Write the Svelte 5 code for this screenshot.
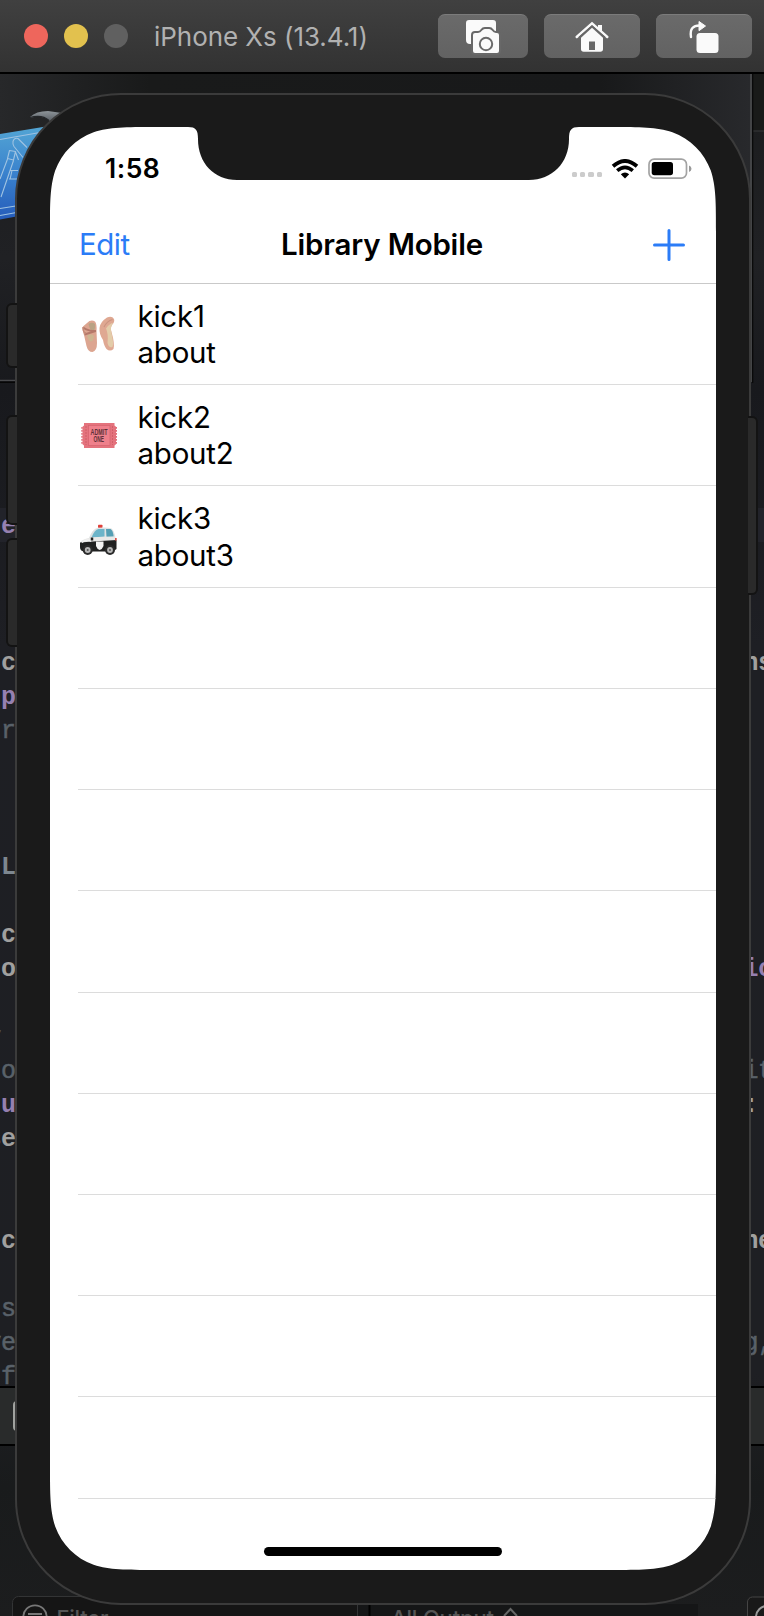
<script>
  const items = [
    { icon: 'shoes', name: 'kick1', about: 'about' },
    { icon: 'ticket', name: 'kick2', about: 'about2' },
    { icon: 'police', name: 'kick3', about: 'about3' },
  ];
  const emptyRows = Array.from({ length: 9 });

  // Editor code peeking out on either side of the device
  const code = [
    { x: 1, y: 533, t: 'e', c: 'key' },
    { x: 1, y: 670, t: 'c', c: 'plain' },
    { x: 1, y: 704, t: 'p', c: 'key' },
    { x: 1, y: 738, t: 'r', c: 'note' },
    { x: 1, y: 874, t: 'L', c: 'mark' },
    { x: 1, y: 942, t: 'c', c: 'plain' },
    { x: 1, y: 976, t: 'o', c: 'plain' },
    { x: -8, y: 1034, t: ',', c: 'note' },
    { x: 1, y: 1078, t: 'o', c: 'note' },
    { x: 1, y: 1112, t: 'u', c: 'key' },
    { x: -13.4, y: 1146, t: 'se', c: 'plain' },
    { x: 1, y: 1248, t: 'c', c: 'plain' },
    { x: 1, y: 1316, t: 's', c: 'note' },
    { x: -13.4, y: 1350, t: 've', c: 'note' },
    { x: 1, y: 1384, t: 'f', c: 'note' },
    { x: 743.5, y: 670, t: 'ns', c: 'plain' },
    { x: 743.5, y: 976, t: 'ic', c: 'key' },
    { x: 743.5, y: 1078, t: 'it', c: 'note' },
    { x: 743.5, y: 1112, t: ':', c: 'plain' },
    { x: 743.5, y: 1248, t: 'ne', c: 'plain' },
    { x: 743.5, y: 1350, t: 'g,', c: 'note' },
  ];
</script>

<div class="desktop">
  <svg class="backdrop" width="764" height="1616" viewBox="0 0 764 1616">
    <defs>
      <linearGradient id="shade" x1="0" x2="0" y1="0" y2="1">
        <stop offset="0" stop-color="#191a1b" /><stop offset="0.16" stop-color="#202124" />
        <stop offset="0.24" stop-color="#18191d" /><stop offset="0.4" stop-color="#1e1f24" />
        <stop offset="0.85" stop-color="#1e1f23" /><stop offset="0.92" stop-color="#191b1c" />
        <stop offset="1" stop-color="#1c1d1e" />
      </linearGradient>
      <linearGradient id="blueprint" x1="0" x2="0" y1="0" y2="1">
        <stop offset="0" stop-color="#53a5d4" /><stop offset="0.5" stop-color="#3a82cd" /><stop offset="1" stop-color="#255cba" />
      </linearGradient>
      <linearGradient id="topglow" x1="0" x2="1" y1="0" y2="0">
        <stop offset="0" stop-color="#27282a" /><stop offset="0.2" stop-color="#191a1a" />
        <stop offset="0.8" stop-color="#18191a" /><stop offset="1" stop-color="#28292c" />
      </linearGradient>
      <linearGradient id="steel" x1="0" x2="0" y1="0" y2="1">
        <stop offset="0" stop-color="#8d9499" /><stop offset="1" stop-color="#5a6066" />
      </linearGradient>
    </defs>
    <rect width="764" height="1616" fill="url(#shade)" />
    <rect y="74" width="750" height="120" fill="url(#topglow)" />
    <rect x="753" y="74" width="11" height="57" fill="#191a19" />
    <path d="M753 131h11" stroke="#2f3032" stroke-width="1.5" />
    <path d="M751 74v308" stroke="#434446" stroke-width="2" />
    <path d="M752.7 74v309" stroke="#080808" stroke-width="1.2" />
    <path d="M0 380.5h17" stroke="#48494c" stroke-width="1.5" />
    <path d="M0 382.2h17" stroke="#060606" stroke-width="1.5" />
    <rect y="508" width="16" height="34" fill="#22232a" />
    <rect x="751" y="508" width="13" height="34" fill="#22232a" />

    <path d="M0 134L46 126.500L30 214L0 219.500Z" fill="url(#blueprint)" />
    <g fill="none" stroke="#9fc3e2" stroke-width="1.100" stroke-linejoin="round">
      <path d="M0 139.500L40 132.500M0 208.500L22 205M0 215.500L22 211.500" />
      <path d="M18 138.500q-4-1-5 3-.5 3 1 5l9 11M18 138.500l9 9" />
      <path d="M9.500 150.500l6 1-2 8.500-6-1.500zM7.500 159L0 179M13.500 160.500L1 197M15.500 152l3 8" />
      <path d="M10 170.500h8M9 179h8M12 170.500l-2 9" />
    </g>
    <path d="M30 117Q36 111 48 111L62 113L50 121Q42 114.500 30 118Z" fill="url(#steel)" />
    <path d="M30 117.500Q42 114 49 120.500" fill="none" stroke="#24272a" stroke-width="1.200" />

    <g class="code">
      {#each code as f}
        <text x={f.x} y={f.y} class={f.c}>{f.t}</text>
      {/each}
    </g>

    <rect y="1386" width="764" height="60" fill="#292b2b" />
    <path d="M0 1387h764M0 1445h764" stroke="#000" stroke-width="2" />
    <rect x="14" y="1402" width="20" height="28" rx="3" fill="none" stroke="#a0a29f" stroke-width="2" />

    <g class="console">
      <rect x="12.5" y="1596.5" width="345" height="34" rx="6" fill="#151515" stroke="#333435" />
      <rect x="358" y="1604" width="340" height="12" fill="#151617" />
      <path d="M369.5 1596v20" stroke="#000" stroke-width="2" />
      <circle cx="35" cy="1617" r="11.7" fill="none" stroke="#777" stroke-width="1.8" />
      <path d="M28 1614h14" stroke="#777" stroke-width="2" />
      <text x="56.5" y="1626" textLength="52">Filter</text>
      <text x="391" y="1626" textLength="103">All Output</text>
      <path d="M504 1616l6.5-7 6.5 7" fill="none" stroke="#666" stroke-width="2" />
      <rect x="747.5" y="1597" width="30" height="34" rx="5" fill="#191919" stroke="#444" />
      <circle cx="767" cy="1617" r="11" fill="none" stroke="#999" stroke-width="2" />
    </g>
  </svg>

  <main class="simulator">
    <header class="titlebar">
      <div class="lights"><i class="close"></i><i class="min"></i><i class="zoom"></i></div>
      <span class="wintitle">iPhone Xs (13.4.1)</span>
      <div class="tools">
        <button class="tool first" aria-label="Screenshot">
          <svg width="36" height="36" viewBox="0 0 36 36">
            <path d="M4 1h24a3 3 0 0 1 3 3v12H7v9H5a4 4 0 0 1-4-4V4a3 3 0 0 1 3-3z" fill="#fafafa" />
            <path d="M10 13h3q2 0 3.3-2 1.5-2 3.5-2h4.400q2 0 3.500 2 1.300 2 3.300 2H32q3 0 3 3v16q0 3-3 3H10q-3 0-3-3V16q0-3 3-3z" fill="#fafafa" stroke="#686868" stroke-width="2" />
            <circle cx="21" cy="25" r="6.200" fill="none" stroke="#6a6a6a" stroke-width="2" />
          </svg>
        </button>
        <button class="tool" aria-label="Home">
          <svg width="36" height="32" viewBox="0 0 36 32">
            <path d="M24 4h4v8l-4-4z" fill="#fafafa" />
            <path d="M2.700 16L18 2.500 33.300 16" stroke="#fafafa" stroke-width="2.500" stroke-linecap="round" fill="none" />
            <path d="M7 16.800L18 6.800l11 10V28q0 2.700-2.700 2.700H9.700Q7 30.700 7 28z" fill="#fafafa" />
            <path d="M5 16.300L18 4.800l13 11.500" stroke="#686868" stroke-width="1.200" fill="none" />
            <path d="M15 20.500h6V29h-6z" fill="#686868" />
          </svg>
        </button>
        <button class="tool" aria-label="Rotate">
          <svg width="32" height="34" viewBox="0 0 32 34">
            <rect x="8.500" y="13" width="22" height="20" rx="3.500" fill="#fafafa" />
            <path d="M3 17C1.500 8.500 5.500 5.500 11.500 5.500" fill="none" stroke="#fafafa" stroke-width="2.400" stroke-linecap="round" />
            <path d="M11 1.500L17.500 6 11 10.700z" fill="#fafafa" stroke="#fafafa" stroke-linejoin="round" />
          </svg>
        </button>
      </div>
    </header>

    <section class="phone">
      <i class="key mute"></i><i class="key up"></i><i class="key down"></i><i class="key side"></i>
      <div class="screen">
        <div class="status">
          <span class="time">1:58</span>
          <div class="signals">
            <div class="dots"><i></i><i></i><i></i><i></i></div>
            <svg width="28" height="20" viewBox="0 0 28 20">
              <path d="M2 7.200Q14-3.300 26 7.200" fill="none" stroke="#000" stroke-width="3.800" />
              <path d="M6.200 11.700Q14 5 21.800 11.700" fill="none" stroke="#000" stroke-width="3.600" />
              <path d="M9.800 15.300Q14 11.500 18.200 15.300L14 19.500z" />
            </svg>
            <svg class="battery" width="44" height="22" viewBox="0 0 44 22">
              <rect x="1" y="1.200" width="37.500" height="19" rx="5.200" fill="#fff" stroke="#a3a3a3" stroke-width="1.700" />
              <rect x="3.700" y="4" width="21.300" height="13.300" rx="2.700" />
              <path d="M41 7.500q2.500 1 2.500 3.300T41 14z" fill="#999" />
            </svg>
          </div>
        </div>

        <nav>
          <span class="edit">Edit</span>
          <h1>Library Mobile</h1>
          <svg width="32" height="32" viewBox="0 0 32 32"><path d="M16 1.500v29M1.500 16h29" stroke="#2b7cf7" stroke-width="3" stroke-linecap="round" /></svg>
        </nav>

        <ul>
          {#each items as item}
            <li>
              <svg class="emoji" width="38" height="38" viewBox="0 0 38 38">
                {#if item.icon === 'shoes'}
                  <path d="M8 8Q12 4 16 6.500Q18 9 17.500 16L18 28Q18 36 13.500 37Q9 37 7.500 31L5 20Q3 15 4 11.500z" fill="#dca590" />
                  <path d="M9.500 9Q13 6.500 16 9Q16.500 15 14 16Q11 16 9.500 9z" fill="#b9a284" />
                  <path d="M8 20.500Q13 18 15 21Q14.500 27 11.500 26.500Q9.500 26 8 20.500z" fill="#cdb591" />
                  <path d="M4 12.500q6 4 13 3.500M5.500 19.500l11-3.500" fill="none" stroke="#b5796a" stroke-width="2" />
                  <path d="M4 12q0 6 3 6" fill="none" stroke="#c58b78" stroke-width="1.500" />
                  <path d="M20.500 13Q21 7 28 2.500Q33 .5 35 4Q36 7 33 10Q31 13 32.500 17Q36 29 34.500 34Q31 37 27.500 34Q25 31 24 25Q20 19 20.500 13z" fill="#dfa892" />
                  <path d="M27 13.500Q31 8 34 8Q31 12 32.500 18Q35 29 33.500 32Q30 33.500 28.500 28Q29.500 19 27 13.500z" fill="#e3cca9" />
                  <path d="M25 12Q28 6 33.500 4.500" fill="none" stroke="#cb9480" stroke-width="1.200" />
                {:else if item.icon === 'ticket'}
                  <path d="M5 7H35.500V9.500l1.500 1.200v17.600L35.500 29.500V32H5V29.500L3.500 28.300V10.700L5 9.500z" fill="#e4737d" />
                  <path d="M3 11v17.500M37.300 11v17.500" stroke="#df6c77" stroke-width="1.400" stroke-dasharray="1.700 1.300" />
                  <rect x="9.500" y="9.500" width="21.500" height="20" fill="#ef808b" stroke="#d4626e" stroke-width=".7" />
                  <path d="M7 10v19M33.500 10v19" stroke="#ce5c67" stroke-width=".9" stroke-dasharray="2 1" />
                  <text x="11.500" y="19" textLength="17" lengthAdjust="spacingAndGlyphs">ADMIT</text>
                  <text x="14.500" y="26" textLength="10.500" lengthAdjust="spacingAndGlyphs">ONE</text>
                {:else}
                  <rect x="19" y="6.800" width="4.500" height="3.200" rx=".7" fill="#e0403a" />
                  <path d="M9.500 21Q13.500 10.500 19 9.800Q28 8.800 32.500 10.500Q35.500 13 36.500 20L37 24H9z" fill="#dfe2e3" />
                  <path d="M12.500 19.500Q15.500 11.800 19.500 11H25.500V18.500z" fill="#6cb4c9" />
                  <path d="M27 11h4.500q2.500 1.200 3.200 7.800H27.500z" fill="#559fb4" />
                  <path d="M1.500 24Q4 20.500 12 19.500L35.500 18.500L37.500 23V27H1.500z" fill="#e9e9e8" />
                  <path d="M1 24.500L14 23.500L37.500 22V31q-2 2-6 2.500H5Q1 33 1 29z" fill="#202121" />
                  <path d="M3 24.500q5-4 9-1" fill="none" stroke="#f4f4f4" stroke-width="1.200" />
                  <path d="M17 23.500h7.500v4.500q-1 3-3.800 4-2.700-1-3.700-4z" fill="#f4f4f4" />
                  <path d="M13 19.500v3" stroke="#222" stroke-width="2.500" />
                  <circle cx="8.700" cy="32" r="5" fill="#2b2b2b" /><circle cx="8.700" cy="32" r="2.900" fill="#b7b7b7" />
                  <circle cx="31" cy="32" r="5" fill="#2b2b2b" /><circle cx="31" cy="32" r="2.900" fill="#b7b7b7" />
                  <circle cx="8.700" cy="32" r="1" fill="#555" /><circle cx="31" cy="32" r="1" fill="#555" />
                  <rect x="36" y="20" width="1.700" height="2.500" fill="#da514b" />
                {/if}
              </svg>
              <div class="label"><span>{item.name}</span><span>{item.about}</span></div>
            </li>
          {/each}
          {#each emptyRows as _}<li></li>{/each}
        </ul>
        <div class="home"></div>
      </div>
    </section>
  </main>
</div>

<style>
  :global(body) { margin: 0; background: #1d1e21; }
  * { box-sizing: border-box; }
  .desktop {
    display: grid;
    width: 764px;
    height: 1616px;
    overflow: hidden;
    font-family: Inter, 'Liberation Sans', sans-serif;
  }
  .backdrop, .simulator { grid-area: 1 / 1; min-width: 0; }
  svg { display: block; flex: none; }
  .simulator { position: relative; }
  .code { font: bold 25px 'Liberation Mono', monospace; letter-spacing: -0.5px; }
  .plain { fill: #a0a09f; }
  .key { fill: #9580b0; }
  .note { fill: #596169; stroke: #596169; stroke-width: 0.5px; font-weight: normal; }
  .mark { fill: #7d8790; }
  .console { font: 500 22px Inter, sans-serif; fill: #555; }

  .titlebar {
    display: flex;
    align-items: center;
    height: 74px;
    padding: 0 12px 0 24px;
    border-bottom: 2px solid #000;
    background: linear-gradient(#404040, #323232);
  }
  .lights { display: flex; gap: 16px; }
  .lights i { width: 24px; height: 24px; border-radius: 50%; }
  .close { background: #ee665c; }
  .min { background: #e2c14e; }
  .zoom { background: #606060; }
  .wintitle {
    margin: 1px 0 0 26px;
    color: #b1b1b1;
    font-size: 26px;
    letter-spacing: -0.05px;
    white-space: nowrap;
  }
  .tools { display: flex; gap: 16px; margin-left: auto; }
  .tool {
    display: grid;
    place-items: center;
    width: 96px;
    height: 44px;
    padding: 0;
    border: 0;
    border-top: 1px solid #7b7b7b;
    border-radius: 7px;
    background: linear-gradient(#6a6a6a, #626262);
  }
  .first { width: 90px; }

  .phone {
    position: relative;
    width: 736px;
    height: 1512px;
    margin: 19px 0 0 15px;
    padding: 32px 33px;
    border: 2px solid #3b3b3b;
    border-radius: 106px;
    background: #1a1a1a;
  }
  .key {
    position: absolute;
    left: -9px;
    width: 9px;
    background: #2a2a2a;
    border-radius: 4px 0 0 4px;
    box-shadow: 0 0 0 2px #131313;
    clip-path: inset(-3px 0 -3px -3px);
  }
  .mute { top: 210px; height: 61px; }
  .up { top: 322px; height: 106px; }
  .down { top: 445px; height: 105px; }
  .side {
    top: 323px;
    left: auto;
    right: -7px;
    width: 8px;
    height: 175px;
    border-radius: 0 4px 4px 0;
    clip-path: inset(-3px -3px -3px 0);
  }

  .screen {
    display: flex;
    flex-direction: column;
    width: 666px;
    height: 1443px;
    background: #fff;
    color: #000;
    clip-path: path('M105.500 0 H138 C146 0 148 3 148 12 C148 36 164 53 187 53 H479 C502 53 519 36 519 12 C519 3 521 0 529 0 H560.500 C590.900 0 606.100 0 622.400 5.200 C640.300 11.700 654.300 25.700 660.800 43.600 C666 59.900 666 75.100 666 105.500 V1337.500 C666 1367.900 666 1383.100 660.800 1399.400 C654.300 1417.300 640.300 1431.300 622.400 1437.800 C606.100 1443 590.900 1443 560.500 1443 H105.500 C75.100 1443 59.900 1443 43.600 1437.800 C25.700 1431.300 11.700 1417.300 5.200 1399.400 C0 1383.100 0 1367.900 0 1337.500 V105.500 C0 75.100 0 59.900 5.200 43.600 C11.700 25.700 25.700 11.700 43.600 5.200 C59.900 0 75.100 0 105.500 0 Z');
  }
  .status {
    display: flex;
    align-items: center;
    justify-content: space-between;
    height: 78px;
    padding: 4px 24px 0 55px;
  }
  .time { font-size: 26.500px; font-weight: 600; letter-spacing: 0.5px; }
  .signals { display: flex; align-items: center; gap: 9px; margin-top: 1px; }
  .dots { display: flex; gap: 3px; margin-top: 12px; }
  .dots i { width: 5.300px; height: 5.300px; border-radius: 1.500px; background: #ccc; }
  nav {
    display: grid;
    grid-template-columns: 1fr auto 1fr;
    align-items: center;
    height: 79px;
    padding: 0 31px 0 29px;
    border-bottom: 1px solid #c9c9c9;
  }
  nav svg { justify-self: end; margin-top: 1px; }
  .edit { color: #2b7cf7; font-size: 29.500px; letter-spacing: -0.5px; }
  h1 { margin: 0; font-size: 29.500px; font-weight: 600; letter-spacing: -0.2px; }
  ul { flex: none; margin: 0; padding: 0 0 0 28px; list-style: none; }
  li {
    display: flex;
    align-items: center;
    height: 101.230px;
    border-bottom: 1px solid #dcdcdc;
  }
  .emoji { margin-left: 1px; }
  .emoji text { font: bold 8.500px 'Liberation Sans', sans-serif; fill: #603038; }
  .label {
    display: flex;
    flex-direction: column;
    margin: 0 0 0 20.500px;
    font-size: 29.500px;
    line-height: 36.300px;
    letter-spacing: -0.250px;
  }
  .home { width: 238px; height: 9px; margin: 48px auto 0; border-radius: 5px; background: #000; }
</style>
